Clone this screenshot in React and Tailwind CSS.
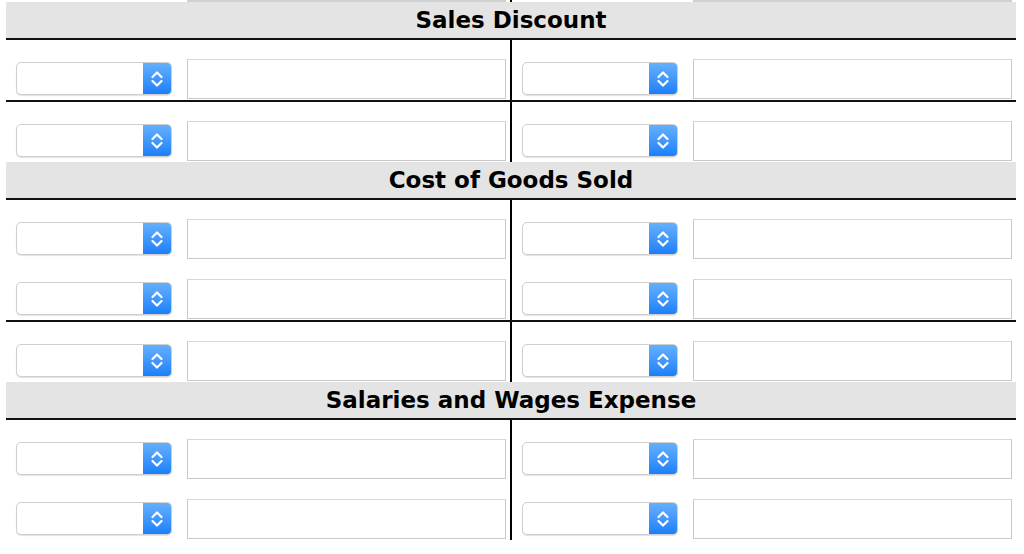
import React from "react";

const sections = [
  { title: "Sales Discount", rows: [true, false] },
  { title: "Cost of Goods Sold", rows: [false, true, false] },
  { title: "Salaries and Wages Expense", rows: [false, false] },
];

function Chevrons() {
  return (
    <svg viewBox="0 0 12 20" className="h-[20px] w-[12px]" fill="none" stroke="white" strokeWidth="2.2" strokeLinecap="round" strokeLinejoin="round" aria-hidden>
      <path d="M1.5 8 6 3.5 10.5 8" />
      <path d="M1.5 12l4.5 4.5 4.5-4.5" />
    </svg>
  );
}

function Select() {
  return (
    <div className="mb-[4px] flex h-[33px] w-[156px] shrink-0 overflow-hidden rounded-[5px] border border-[#cfcfcf] bg-white shadow-[0_1px_1px_rgba(0,0,0,0.12)]">
      <div className="flex-1" />
      <div className="flex w-[28px] items-center justify-center bg-gradient-to-b from-[#63b0fd] to-[#1a7ff9]">
        <Chevrons />
      </div>
    </div>
  );
}

function Cell() {
  return (
    <div className="flex flex-1 items-end gap-[15px] pb-[1px] pl-[10px] pr-[4px]">
      <Select />
      <div className="h-[40px] flex-1 border border-[#c9c9c9] border-t-[#d6d6d6] bg-white" />
    </div>
  );
}

export default function App() {
  return (
    <div className="min-h-[554px] bg-white pl-[6px] pr-[8px] font-['DejaVu_Sans',sans-serif]">
      <div className="flex h-[2px]">
        <div className="flex flex-1 pl-[181px] pr-[4px]">
          <div className="flex-1 bg-[#d0d0d0]" />
        </div>
        <div className="w-[2px] bg-black" />
        <div className="flex flex-1 pl-[181px] pr-[4px]">
          <div className="flex-1 bg-[#d0d0d0]" />
        </div>
      </div>
      {sections.map((s) => (
        <div key={s.title}>
          <div className="flex h-[38px] items-center justify-center border-b-2 border-[#111] bg-[#e4e4e4]">
            <span className="text-[23px] font-bold leading-none text-black">{s.title}</span>
          </div>
          {s.rows.map((line, i) => (
            <div key={i} className={`flex h-[60px] ${line ? "box-content border-b-2 border-[#111]" : ""}`}>
              <Cell />
              <div className="w-[2px] bg-black" />
              <Cell />
            </div>
          ))}
        </div>
      ))}
    </div>
  );
}
